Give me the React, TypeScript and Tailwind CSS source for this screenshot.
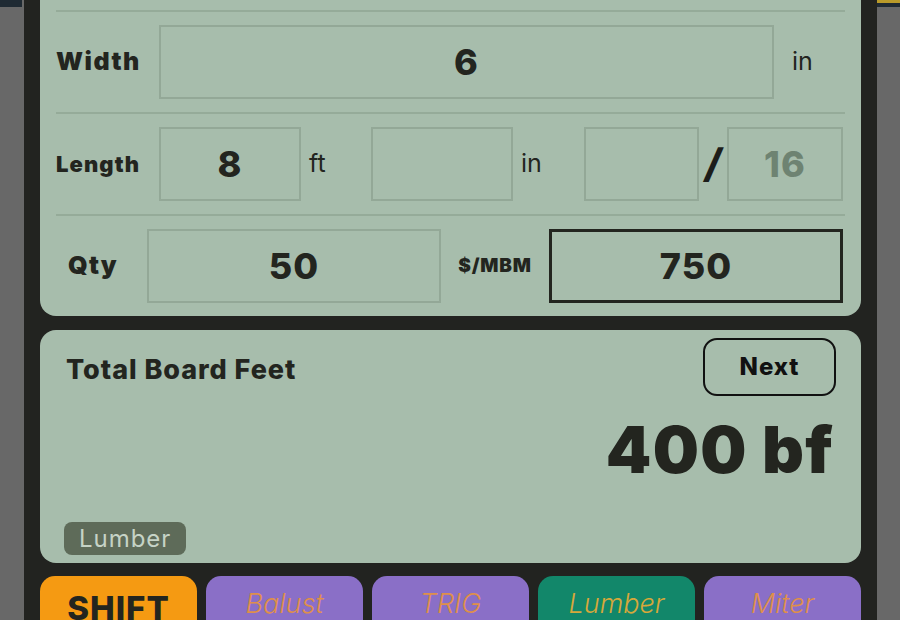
import React from 'react';

const font = { fontFamily: 'Inter, "Noto Sans", "Liberation Sans", sans-serif' };

function Box({ children, className = '', color = 'text-[#23251f]', border = 'border-2 border-[#93a897]' }: {
  children?: React.ReactNode;
  className?: string;
  color?: string;
  border?: string;
}) {
  return (
    <div
      className={`h-[74px] flex items-center justify-center text-[36px] font-extrabold tracking-[0.03em] ${border} ${color} ${className}`}
    >
      {children}
    </div>
  );
}

function Divider() {
  return <div className="h-[2px] shrink-0 bg-[#95ab99]" />;
}

const keys = [
  { label: 'SHIFT', bg: 'bg-[#f59a12]', text: 'pt-[14px] text-[#23251f] font-extrabold text-[33px] tracking-[0.03em]' },
  { label: 'Balust', bg: 'bg-[#8a6fc7]', text: 'pt-[10px] text-[#df8f4a] italic font-light text-[27px]' },
  { label: 'TRIG', bg: 'bg-[#8a6fc7]', text: 'pt-[10px] text-[#df8f4a] italic font-light text-[27px]' },
  { label: 'Lumber', bg: 'bg-[#12876a]', text: 'pt-[10px] text-[#d6a83a] italic font-light text-[27px]' },
  { label: 'Miter', bg: 'bg-[#8a6fc7]', text: 'pt-[10px] text-[#df8f4a] italic font-light text-[27px]' },
];

export default function App() {
  return (
    <div className="w-[900px] h-[620px] overflow-hidden flex bg-[#686868]" style={font}>
      {/* left edge */}
      <div className="w-[24px] flex flex-col">
        <div className="h-[7px] w-[22px] bg-[#1f2a33]" />
      </div>

      {/* device frame */}
      <div className="w-[853px] bg-[#222320] px-[16px] flex flex-col">
        {/* inputs panel */}
        <div className="h-[316px] shrink-0 bg-[#a7bdac] rounded-b-[16px] px-[16px] pt-[10px] flex flex-col">
          <Divider />
          <div className="h-[100px] shrink-0 flex items-center">
            <div className="w-[103px] text-[25px] font-black tracking-[0.06em] text-[#23251f]">Width</div>
            <Box className="flex-1">6</Box>
            <div className="w-[71px] pl-[18px] text-[25px] text-[#23251f]">in</div>
          </div>
          <Divider />
          <div className="h-[100px] shrink-0 flex items-center">
            <div className="w-[103px] text-[22px] font-black tracking-[0.05em] text-[#23251f]">Length</div>
            <Box className="w-[142px]">8</Box>
            <div className="w-[70px] pl-[8px] text-[25px] text-[#23251f]">ft</div>
            <Box className="w-[142px]" />
            <div className="w-[71px] pl-[8px] text-[25px] text-[#23251f]">in</div>
            <Box className="w-[115px]" />
            <div className="w-[28px] text-center text-[40px] font-extrabold italic text-[#1c1d1a]">/</div>
            <Box className="w-[116px]" color="text-[#6e8372]">16</Box>
          </div>
          <Divider />
          <div className="h-[100px] shrink-0 flex items-center">
            <div className="w-[91px] pl-[12px] text-[25px] font-black tracking-[0.05em] text-[#23251f]">Qty</div>
            <Box className="w-[294px]">50</Box>
            <div className="w-[108px] text-center text-[19px] font-black tracking-[0.04em] text-[#23251f]">$/MBM</div>
            <Box className="w-[294px]" border="border-[3px] border-[#23251f]">750</Box>
          </div>
        </div>

        {/* result panel */}
        <div className="mt-[14px] h-[233px] shrink-0 bg-[#a7bdac] rounded-[16px] pl-[26px] pr-[25px] pt-[8px] pb-[8px] flex flex-col">
          <div className="flex items-start justify-between">
            <div className="pt-[12px] text-[27px] font-extrabold tracking-[0.035em] text-[#23251f]">Total Board Feet</div>
            <button className="w-[133px] h-[58px] rounded-[14px] border-2 border-[#111] text-[24px] font-extrabold tracking-[0.04em] text-[#111]">
              Next
            </button>
          </div>
          <div className="mt-[16px] pr-[2px] text-right text-[65px] leading-[76px] font-black tracking-[0.02em] text-[#23251f]">
            400 bf
          </div>
          <div className="mt-auto">
            <span className="inline-flex items-center h-[33px] px-[15px] ml-[-2px] rounded-[8px] bg-[#5e6b59] text-[24px] tracking-[0.04em] text-[#c6d3c6]">
              Lumber
            </span>
          </div>
        </div>

        {/* key row */}
        <div className="mt-[13px] shrink-0 grid grid-cols-5 gap-[9px]">
          {keys.map(k => (
            <div key={k.label} className={`h-[60px] rounded-t-[15px] flex justify-center ${k.bg}`}>
              <span className={`leading-[36px] ${k.text}`}>{k.label}</span>
            </div>
          ))}
        </div>
      </div>

      {/* right edge */}
      <div className="w-[23px] flex flex-col">
        <div className="h-[3px] bg-[#b99a2a]" />
        <div className="h-[4px] bg-[#1f2a33]" />
      </div>
    </div>
  );
}
